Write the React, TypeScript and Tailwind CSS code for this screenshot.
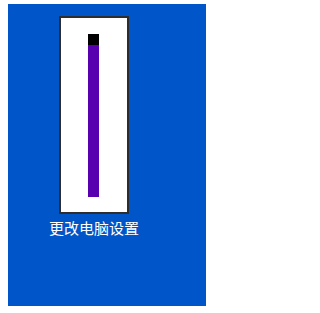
export default function App() {
  return (
    <div className="h-[313px] w-[227px] bg-white pl-2 pt-1">
      <div className="flex h-[302px] w-[198px] flex-col bg-[#0055c8]">
        <div className="ml-[51px] mt-3 flex w-[70px] flex-col items-center">
          <div className="h-[198px] w-[70px] border-2 border-[#2d2d2d] bg-white pl-[27px] pt-4">
            <div className="h-[11px] w-[11px] bg-black" />
            <div className="h-[152px] w-[11px] bg-[#5800b0]" />
          </div>
          <span className="mt-[5px] whitespace-nowrap text-[15px] leading-[18px] text-white [font-family:'Noto_Sans_CJK_SC',sans-serif]">
            更改电脑设置
          </span>
        </div>
      </div>
    </div>
  );
}
